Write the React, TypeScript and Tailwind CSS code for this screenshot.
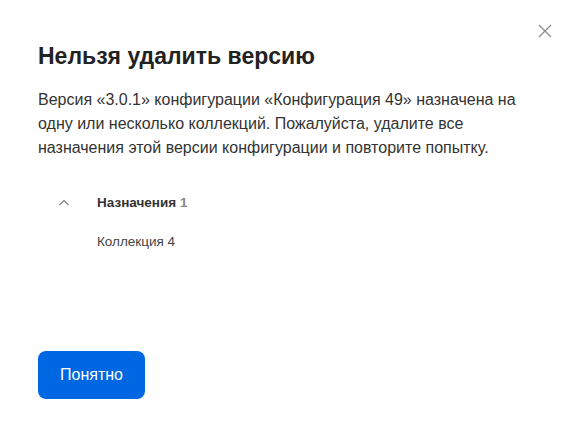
import React from "react";

export default function App() {
  return (
    <div className="w-[577px] h-[437px] bg-white relative font-['Liberation_Sans',Arial,sans-serif] text-[#222]">
      <button className="absolute right-[25px] top-[24px] text-[#8a8a8a]" aria-label="Закрыть">
        <svg width="14" height="14" viewBox="0 0 14 14" fill="none" stroke="currentColor" strokeWidth="1.3">
          <path d="M1 1 L13 13 M13 1 L1 13" />
        </svg>
      </button>
      <div className="flex flex-col h-full pl-[38px] pr-[20px] pt-[41px] pb-[38px]">
        <h1 className="text-[23px] leading-[30px] font-bold text-[#222]">Нельзя удалить версию</h1>
        <p className="mt-[17px] text-[16px] leading-[24px] text-[#333] whitespace-nowrap">
          Версия «3.0.1» конфигурации «Конфигурация 49» назначена на
          <br />
          одну или несколько коллекций. Пожалуйста, удалите все
          <br />
          назначения этой версии конфигурации и повторите попытку.
        </p>
        <div className="mt-[35px] flex items-start">
          <div className="w-[59px] flex pl-[21px] pt-[4px]">
            <svg width="10" height="7" viewBox="0 0 10 7" fill="none" stroke="#777" strokeWidth="1.1">
              <path d="M0.5 6 L5 1.5 L9.5 6" />
            </svg>
          </div>
          <div className="flex flex-col text-[13.5px] leading-[16px]">
            <div className="font-bold text-[#333]">
              Назначения <span className="text-[#888]">1</span>
            </div>
            <div className="mt-[23px] text-[#444]">Коллекция 4</div>
          </div>
        </div>
        <div className="mt-auto">
          <button className="h-[48px] w-[107px] rounded-[8px] bg-[#0067e3] text-white text-[16px]">Понятно</button>
        </div>
      </div>
    </div>
  );
}
